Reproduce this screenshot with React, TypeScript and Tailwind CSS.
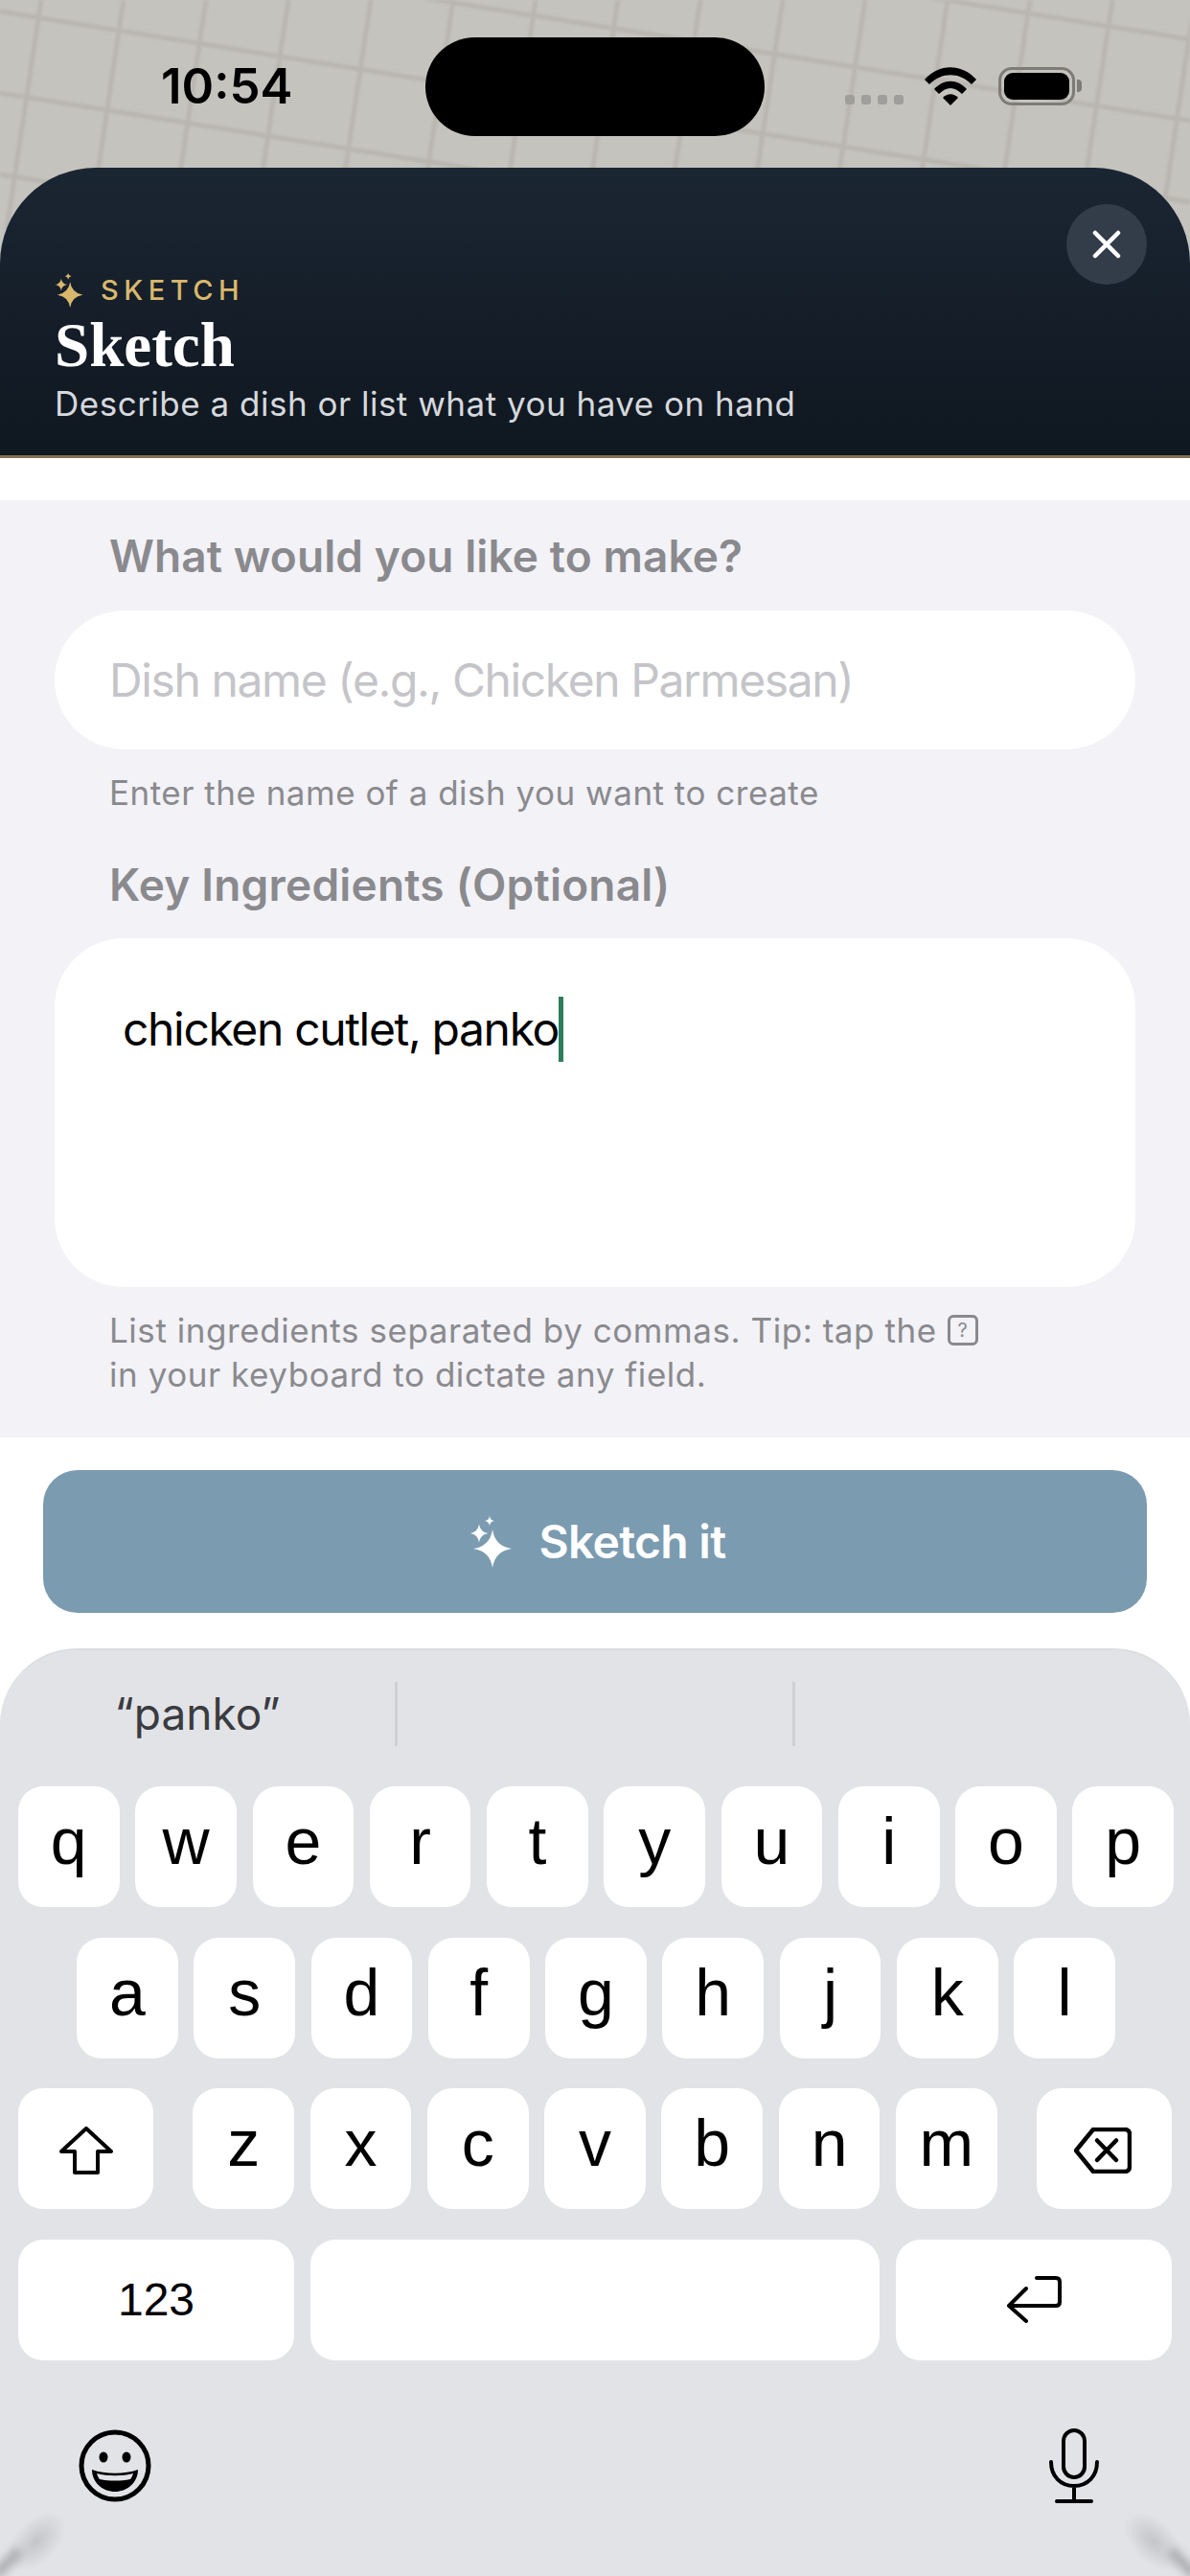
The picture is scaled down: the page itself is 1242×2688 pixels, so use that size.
const row1 = ['q', 'w', 'e', 'r', 't', 'y', 'u', 'i', 'o', 'p'];
const row2 = ['a', 's', 'd', 'f', 'g', 'h', 'j', 'k', 'l'];
const row3 = ['z', 'x', 'c', 'v', 'b', 'n', 'm'];

// four pointed star, used for the sparkle icons
function star(cx: number, cy: number, r: number) {
    const k = r * 0.13;
    return `M${cx} ${cy - r}Q${cx + k} ${cy - k} ${cx + r} ${cy}Q${cx + k} ${cy + k} ${cx} ${cy + r}Q${cx - k} ${cy + k} ${cx - r} ${cy}Q${cx - k} ${cy - k} ${cx} ${cy - r}Z`;
}

function Sparkles({ className }: { className: string }) {
    return (
        <svg viewBox="0 0 44 54" className={className} fill="currentColor">
            <path d={star(23, 34, 20)} />
            <path d={star(9, 18, 9.5)} />
            <path d={star(20, 5, 5)} />
        </svg>
    );
}

function Wallpaper() {
    const verticals = [0, 1, 2, 3, 4, 5, 6, 7, 8, 9, 10, 11, 12, 13, 14];
    const diagonals = [-3, -2, -1, 0, 1, 2];
    return (
        <svg className="absolute inset-0 w-full h-[240px] blur-[1px]" viewBox="0 0 1242 240">
            {verticals.map((i) => (
                <line key={i} x1={43 + i * 86} y1={0} x2={43 + i * 86 - 36} y2={240} stroke="#b9b6b0" strokeWidth={5} />
            ))}
            {diagonals.map((i) => (
                <line key={i} x1={0} y1={12 + i * 85} x2={1242} y2={12 + i * 85 + 199} stroke="#b9b6b0" strokeWidth={5} />
            ))}
        </svg>
    );
}

function StatusBar() {
    return (
        <div className="relative h-[175px] flex items-start">
            <div className="w-[444px] pt-[62px] pl-[168px] text-[51px] leading-[56px] font-semibold text-black">10:54</div>
            <div className="w-[354px] h-[103px] mt-[39px] rounded-[52px] bg-black"></div>
            <div className="flex items-start mt-[70px] ml-[84px]">
                <div className="flex gap-[7px] mt-[29px]">
                    {[0, 1, 2, 3].map((i) => (
                        <div key={i} className="w-[10px] h-[10px] rounded-[3px] bg-[#a09e9a]"></div>
                    ))}
                </div>
                <svg viewBox="0 0 54 40" className="w-[54px] h-[40px] ml-[22px]" fill="black">
                    <path d="M0 13C15 -4 39 -4 54 13L49 18C36 5 18 5 5 18Z" />
                    <path d="M10 23C20 12 34 12 44 23L39 28C31 20 23 20 15 28Z" />
                    <path d="M19 32C24 27 30 27 35 32L27 40Z" />
                </svg>
                <div className="ml-[23px] w-[80px] h-[40px] rounded-[14px] border-[3px] border-[#7d7c79] p-[3px]">
                    <div className="w-full h-full rounded-[9px] bg-black"></div>
                </div>
                <div className="w-[5px] h-[13px] mt-[13px] ml-[2px] rounded-r-[4px] bg-[#7d7c79]"></div>
            </div>
        </div>
    );
}

function Key({ label }: { label: string }) {
    return (
        <div className="w-[105.6px] h-[126px] pb-[12px] rounded-[26px] bg-white flex items-center justify-center text-[68px] text-black font-['Liberation_Sans',sans-serif]">
            {label}
        </div>
    );
}

export default function App() {
    return (
        <div className="w-[1242px] h-[2688px] flex flex-col overflow-hidden bg-white font-['Inter',sans-serif]">
            {/* Wallpaper, status bar and sheet header */}
            <div className="relative bg-[#c5c3be]">
                <Wallpaper />
                <StatusBar />
                <div className="relative h-[303px] rounded-t-[100px] border-b-[3px] border-[#7f7050] bg-gradient-to-b from-[#1b2633] to-[#0f1720] pl-[57px] pt-[109px]">
                    <button className="absolute right-[45px] top-[38px] w-[84px] h-[84px] rounded-full bg-[#333d4a] flex items-center justify-center">
                        <svg viewBox="0 0 30 30" className="w-[30px] h-[30px]" fill="none" stroke="white" strokeWidth={4.5} strokeLinecap="round">
                            <path d="M3 3L27 27M27 3L3 27" />
                        </svg>
                    </button>
                    <div className="flex items-center h-[38px] text-[#d9b86c]">
                        <Sparkles className="w-[31px] h-[36px]" />
                        <span className="ml-[17px] text-[29px] leading-[38px] font-medium tracking-[0.19em]">SKETCH</span>
                    </div>
                    <div className="mt-[3px] text-[65px] leading-[70px] font-bold text-white font-['Liberation_Serif',serif]">Sketch</div>
                    <div className="mt-[4px] text-[35px] leading-[44px] tracking-[0.5px] text-[#d6d8dc]">Describe a dish or list what you have on hand</div>
                </div>
            </div>

            <div className="h-[44px] bg-white"></div>

            {/* Form */}
            <div className="bg-[#f2f2f7] px-[57px] pt-[30px] pb-[43px]">
                <div className="pl-[57px] text-[46px] leading-[56px] font-semibold tracking-[0.1px] text-[#8a8a8e]">What would you like to make?</div>
                <div className="mt-[29px] h-[145px] rounded-full bg-white pl-[57px] flex items-center text-[48px] tracking-[-1.4px] text-[#c5c5c9]">
                    Dish name (e.g., Chicken Parmesan)
                </div>
                <div className="mt-[25px] pl-[57px] text-[35px] leading-[40px] tracking-[0.5px] text-[#8a8a8e]">Enter the name of a dish you want to create</div>
                <div className="mt-[48px] pl-[57px] text-[46px] leading-[56px] font-semibold tracking-[0.2px] text-[#8a8a8e]">Key Ingredients (Optional)</div>
                <div className="mt-[28px] h-[364px] rounded-[72px] bg-white pl-[71px] pt-[61px] flex items-start text-[48px] leading-[68px] tracking-[-1.35px] text-black">
                    <span>chicken cutlet, panko</span>
                    <span className="w-[5px] h-[68px] bg-[#2e7d5b]"></span>
                </div>
                <div className="mt-[22px] pl-[57px] text-[35px] leading-[46px] tracking-[0.55px] text-[#8a8a8e]">
                    <div className="flex items-center">
                        List ingredients separated by commas. Tip: tap the
                        <span className="ml-[11px] w-[32px] h-[32px] rounded-[6px] border-[3px] border-[#8a8a8e] flex items-center justify-center text-[20px] leading-none tracking-normal">?</span>
                    </div>
                    <div>in your keyboard to dictate any field.</div>
                </div>
            </div>

            {/* Submit */}
            <div className="px-[45px] pt-[34px]">
                <button className="w-full h-[149px] rounded-[36px] bg-[#7b9bb0] flex items-center justify-center text-white text-[48px] font-semibold tracking-[-0.7px]">
                    <Sparkles className="w-[44px] h-[54px] mr-[28px] ml-[6px]" />
                    Sketch it
                </button>
            </div>

            {/* Keyboard */}
            <div className="relative mt-[37px] flex-1 rounded-t-[80px] border-t-[2px] border-[#dcdde0] bg-[#e2e3e7] overflow-hidden">
                <div className="flex pt-[33px] pb-[42px]">
                    <div className="flex-1 h-[67px] flex items-center justify-center border-r-[3px] border-[#cfd0d4] text-[46px] text-[#3a3b3f]">“panko”</div>
                    <div className="flex-1 h-[67px] border-r-[3px] border-[#cfd0d4]"></div>
                    <div className="flex-1 h-[67px]"></div>
                </div>
                <div className="flex flex-col gap-[31.5px]">
                    <div className="flex justify-center gap-[16.7px] pl-[2px]">
                        {row1.map((k) => <Key key={k} label={k} />)}
                    </div>
                    <div className="flex justify-center gap-[16.7px] pl-[2px]">
                        {row2.map((k) => <Key key={k} label={k} />)}
                    </div>
                    <div className="flex justify-between px-[19px]">
                        <div className="w-[141px] h-[126px] rounded-[26px] bg-white flex items-center justify-center">
                            <svg viewBox="0 0 58 50" className="w-[58px] h-[50px] mt-[3px]" fill="none" stroke="black" strokeWidth={4} strokeLinejoin="round">
                                <path d="M29 2L55 26H41V48H17V26H3Z" />
                            </svg>
                        </div>
                        <div className="flex gap-[16.7px]">
                            {row3.map((k) => <Key key={k} label={k} />)}
                        </div>
                        <div className="w-[141px] h-[126px] rounded-[26px] bg-white flex items-center justify-center">
                            <svg viewBox="0 0 60 48" className="w-[60px] h-[48px] mt-[3px] mr-[3px]" fill="none" stroke="black" strokeWidth={4.5} strokeLinecap="round" strokeLinejoin="round">
                                <path d="M20 2H53C56 2 58 4 58 7V41C58 44 56 46 53 46H20L2 24Z" />
                                <path d="M24 13.5L44 34M44 13.5L24 34" />
                            </svg>
                        </div>
                    </div>
                    <div className="flex gap-[17px] px-[19px]">
                        <div className="w-[288px] h-[126px] rounded-[26px] bg-white flex items-center justify-center text-[48px] text-black font-['Liberation_Sans',sans-serif]">123</div>
                        <div className="w-[594px] h-[126px] rounded-[26px] bg-white"></div>
                        <div className="w-[288px] h-[126px] rounded-[26px] bg-white flex items-center justify-center">
                            <svg viewBox="0 0 57 49" className="w-[57px] h-[49px]" fill="none" stroke="black" strokeWidth={4} strokeLinecap="round" strokeLinejoin="round">
                                <path d="M31 2H51Q55 2 55 6V27Q55 31 51 31H2M20 13L2 31L20 47" />
                            </svg>
                        </div>
                    </div>
                </div>
                <div className="flex items-center justify-between mt-[71px] pl-[82px] pr-[95px]">
                    <svg viewBox="0 0 76 76" className="w-[76px] h-[76px]">
                        <circle cx="38" cy="38" r="35" fill="none" stroke="black" strokeWidth="5" />
                        <ellipse cx="26" cy="29" rx="4.5" ry="5.5" fill="black" />
                        <ellipse cx="50" cy="29" rx="4.5" ry="5.5" fill="black" />
                        <path d="M14 42C28 47 48 47 62 42C62 56 50 65 38 65C26 65 14 56 14 42Z" fill="black" />
                        <path d="M19 46C30 49 46 49 57 46C56 49 55 51 54 52C44 54 32 54 22 52C21 51 20 49 19 46Z" fill="#e2e3e7" />
                    </svg>
                    <svg viewBox="0 0 52 78" className="w-[52px] h-[78px]" fill="none" stroke="black" strokeWidth={4} strokeLinecap="round">
                        <rect x="15" y="2" width="22" height="49" rx="11" />
                        <path d="M2 35C2 50 12 60 26 60C40 60 50 50 50 35M26 60V75M8 76H44" />
                    </svg>
                </div>
                {/* corner shading of the screen */}
                <div className="absolute left-[0px] bottom-[14px] w-[76px] h-[44px] -rotate-45 bg-[radial-gradient(closest-side,#c4c5c7,transparent)]"></div>
                <div className="absolute left-[-10px] bottom-[8px] w-[36px] h-[12px] -rotate-45 blur-[4px] bg-[#b0b1b3]"></div>
                <div className="absolute right-[0px] bottom-[14px] w-[76px] h-[44px] rotate-45 bg-[radial-gradient(closest-side,#c4c5c7,transparent)]"></div>
                <div className="absolute right-[-10px] bottom-[8px] w-[36px] h-[12px] rotate-45 blur-[4px] bg-[#b0b1b3]"></div>
            </div>
        </div>
    );
}
